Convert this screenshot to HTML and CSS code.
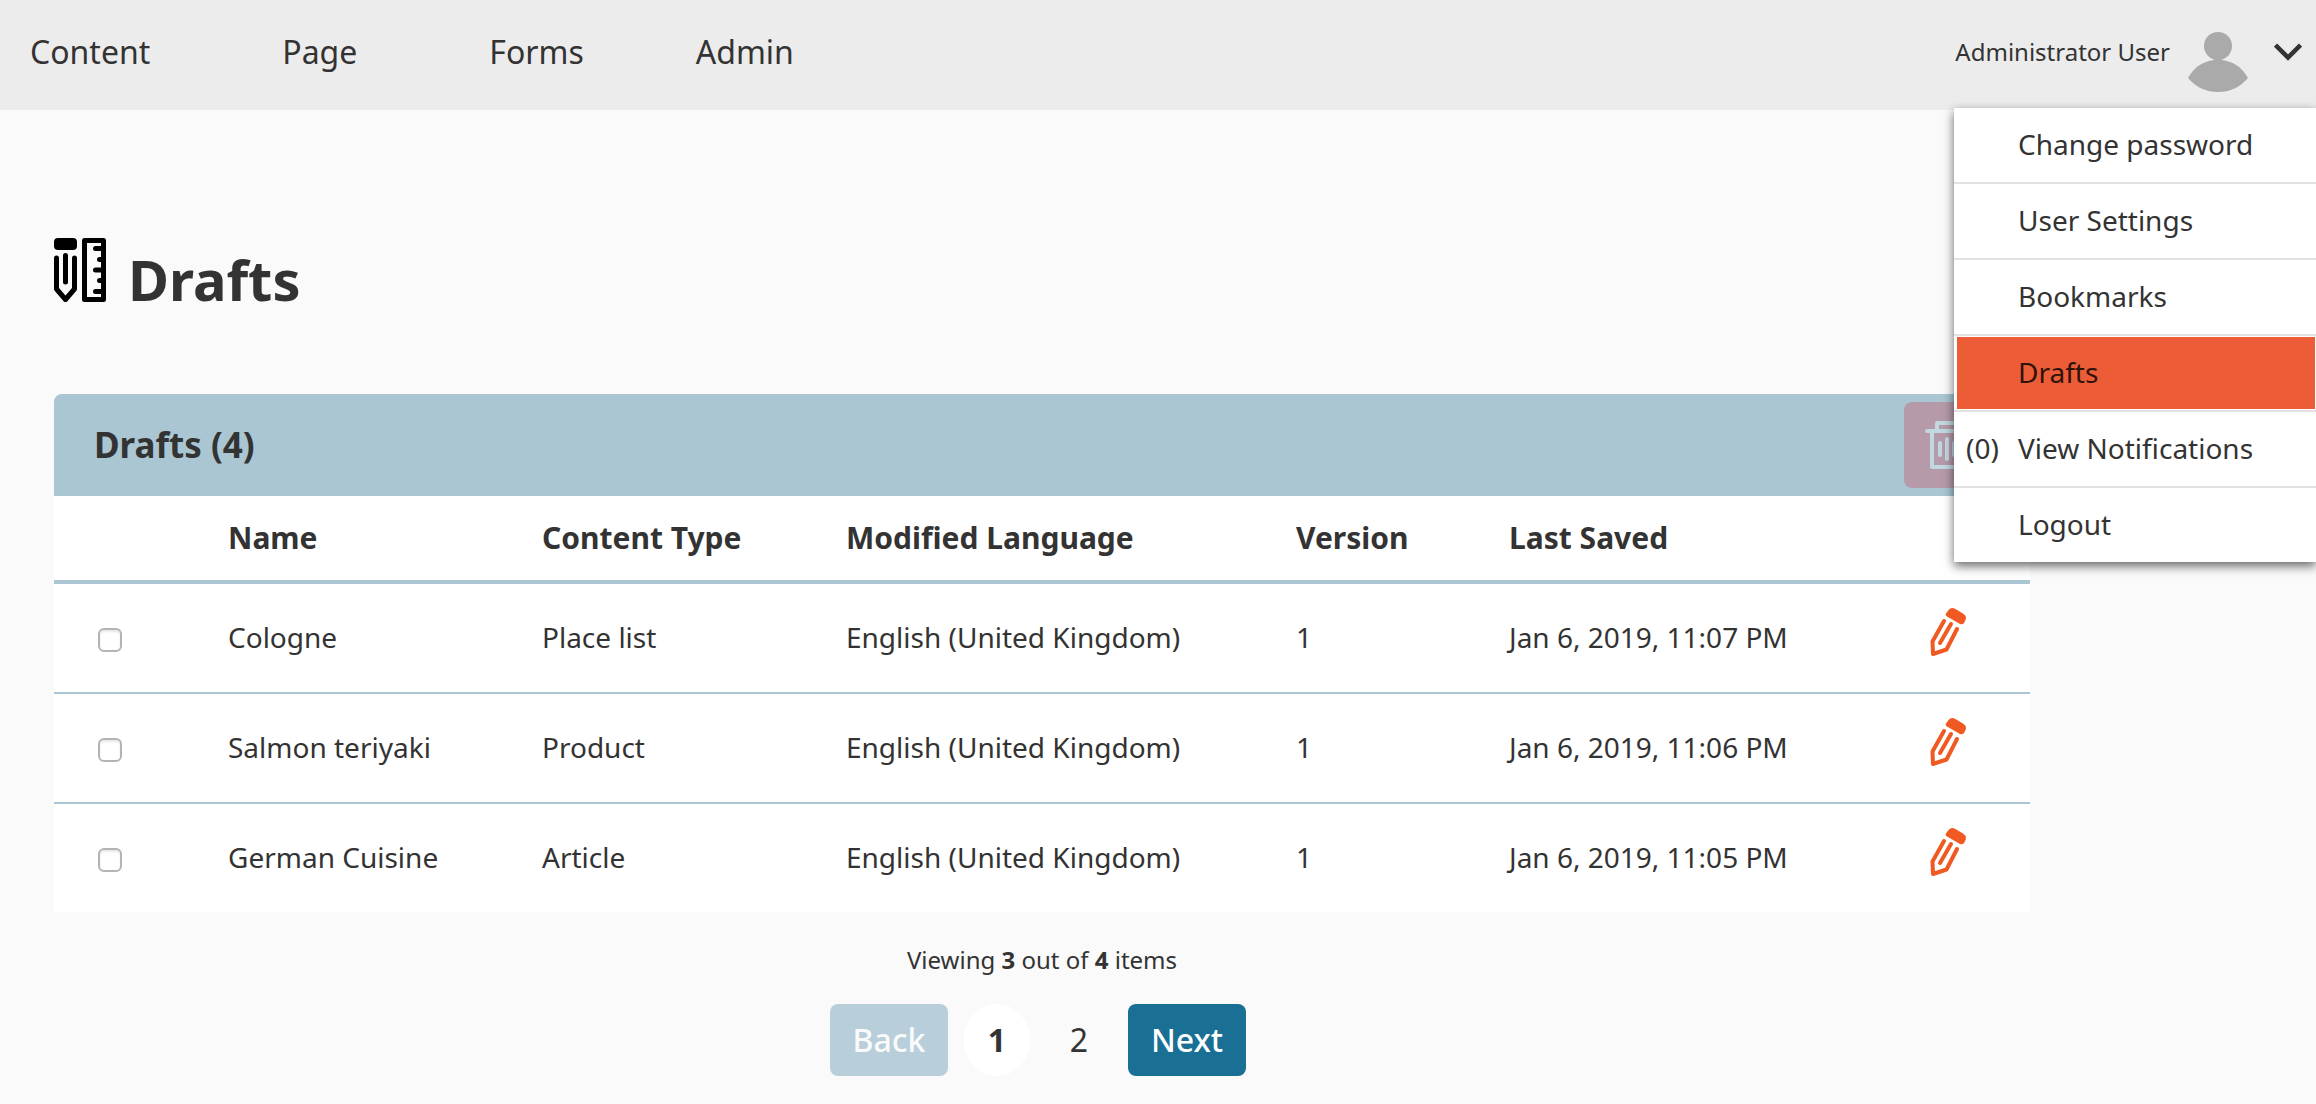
FILE: index.html
```html
<!DOCTYPE html>
<html lang="en">
<head>
<meta charset="utf-8">
<title>Drafts</title>
<link rel="stylesheet" href="styles.css">
</head>
<body>
<svg class="sprite" aria-hidden="true">
  <symbol id="pencil" viewBox="0 0 36 48">
    <g fill="none" stroke="currentColor" stroke-width="4" stroke-linecap="round" stroke-linejoin="round">
      <path d="M14 13 2.500 33.500 3 46 16.500 41.500 27 21"/>
      <path d="M21 16 10 35"/>
    </g>
    <path fill="currentColor" d="M18.500 2Q21-1 24.500.500L33 5.500Q37 8 35.500 12L34 15Q32.500 17 30 16L17 8.500Q15 7 16 5.500Z"/>
  </symbol>
</svg>
<header class="topbar">
  <nav class="nav">
    <a class="has-menu" href="#">Content</a>
    <a class="has-menu" href="#">Page</a>
    <a href="#">Forms</a>
    <a href="#">Admin</a>
  </nav>
  <div class="account">
    <button class="account-toggle" type="button">
      <span>Administrator User</span>
      <svg class="avatar" viewBox="0 0 60 60" aria-hidden="true"><g fill="#aaa"><circle cx="30" cy="14" r="14"/><path d="M26 26H34V28Q51 30 60 46Q48 60 30 60T0 46Q9 30 26 28Z"/></g></svg>
      <svg class="chevron" viewBox="0 0 28 18" aria-hidden="true"><path d="M1.500 2 14 14.500 26.500 2" fill="none" stroke="#333" stroke-width="4.500"/></svg>
    </button>
    <ul class="menu">
      <li><a href="#">Change password</a></li>
      <li><a href="#">User Settings</a></li>
      <li><a href="#">Bookmarks</a></li>
      <li><a class="current" href="#">Drafts</a></li>
      <li><a href="#"><span class="count">(0)</span>View Notifications</a></li>
      <li><a href="#">Logout</a></li>
    </ul>
  </div>
</header>
<main class="page">
  <h1 class="title">
    <svg class="title-icon" viewBox="0 0 52 64" aria-hidden="true">
      <rect width="23" height="12" rx="4"/>
      <g fill="none" stroke="#000" stroke-width="5" stroke-linecap="round" stroke-linejoin="round">
        <path d="M2.500 20V51L11.500 61.500 20.500 51V20M11.500 17.500V44"/>
        <path d="M30.500 2.500H49.500V61.500H30.500ZM49.500 10.500H41.500M49.500 21.500H45.500M49.500 32H41.500M49.500 42.500H45.500M49.500 53.500H41.500"/>
      </g>
    </svg>
    Drafts
  </h1>
  <section class="panel">
    <div class="panel-head">
      <h2>Drafts (4)</h2>
      <button class="delete" type="button" aria-label="Delete selected drafts" disabled>
        <svg class="trash" viewBox="0 0 44 48" aria-hidden="true"><g fill="none" stroke="currentColor" stroke-width="4" stroke-linecap="round" stroke-linejoin="round"><path d="M2 10H42M7 10V46H37V10M12 10V2H32V10M15 22V34M22 18V38M29 22V34"/></g></svg>
      </button>
    </div>
    <table class="drafts">
      <colgroup><col class="c-check"><col><col class="c-type"><col class="c-lang"><col class="c-version"><col class="c-saved"><col class="c-edit"></colgroup>
      <thead>
        <tr><th></th><th>Name</th><th>Content Type</th><th>Modified Language</th><th>Version</th><th>Last Saved</th><th></th></tr>
      </thead>
      <tbody>
        <tr><td><input type="checkbox" aria-label="Select Cologne"></td><td>Cologne</td><td>Place list</td><td>English (United Kingdom)</td><td>1</td><td>Jan 6, 2019, 11:07 PM</td><td><button class="edit" type="button" aria-label="Edit Cologne"><svg><use href="#pencil"/></svg></button></td></tr>
        <tr><td><input type="checkbox" aria-label="Select Salmon teriyaki"></td><td>Salmon teriyaki</td><td>Product</td><td>English (United Kingdom)</td><td>1</td><td>Jan 6, 2019, 11:06 PM</td><td><button class="edit" type="button" aria-label="Edit Salmon teriyaki"><svg><use href="#pencil"/></svg></button></td></tr>
        <tr><td><input type="checkbox" aria-label="Select German Cuisine"></td><td>German Cuisine</td><td>Article</td><td>English (United Kingdom)</td><td>1</td><td>Jan 6, 2019, 11:05 PM</td><td><button class="edit" type="button" aria-label="Edit German Cuisine"><svg><use href="#pencil"/></svg></button></td></tr>
      </tbody>
    </table>
  </section>
  <p class="summary">Viewing <b>3</b> out of <b>4</b> items</p>
  <div class="pager">
    <button class="step" type="button" disabled>Back</button>
    <a class="num active" href="#">1</a>
    <a class="num" href="#">2</a>
    <button class="step" type="button">Next</button>
  </div>
</main>
</body>
</html>
```
FILE: styles.css
```css
* { box-sizing: border-box; }

body {
  margin: 0;
  background: #fafafa;
  color: #333;
  font: 28px/40px "Noto Sans", sans-serif;
}

a { color: inherit; text-decoration: none; }
button { border: 0; padding: 0; background: none; color: inherit; font: inherit; cursor: pointer; }
.sprite { display: none; }

/* Top bar */
.topbar {
  display: flex;
  justify-content: space-between;
  height: 110px;
  padding-left: 30px;
  background: #ececec;
}
.nav { display: flex; gap: 112px; font-size: 32px; line-height: 104px; }
.nav .has-menu { padding-right: 20px; }
.account { position: relative; }
.account-toggle {
  display: flex;
  align-items: center;
  height: 104px;
  padding-right: 14px;
  font-size: 24px;
}
.avatar { width: 60px; height: 60px; margin: 20px 26px 0 18px; }
.chevron { width: 28px; height: 18px; }

.menu {
  position: absolute;
  z-index: 1;
  top: 108px;
  right: 0;
  width: 362px;
  margin: 0;
  padding: 0;
  list-style: none;
  background: #fff;
  box-shadow: 0 4px 10px rgba(0, 0, 0, 0.6);
}
.menu li + li { border-top: 2px solid #e2e2e2; }
.menu a { display: block; position: relative; padding: 16px 0 18px 64px; }
.menu .current {
  margin: 0 1px 0 3px;
  border: solid #fff;
  border-width: 1px 0;
  padding: 15px 0 17px 61px;
  background: #ec5c37;
  background-clip: padding-box;
  color: #2f130b;
}
.count { position: absolute; left: 12px; }

/* Page */
.page { padding: 124px 286px 28px 54px; }
.title {
  display: flex;
  align-items: flex-start;
  gap: 22px;
  margin: 0 0 70px;
  font-size: 56px;
  line-height: 90px;
}
.title-icon { width: 52px; height: 64px; margin: 4px 0 0; }

.panel { background: #fff; border-radius: 8px 8px 0 0; }
.panel-head {
  display: flex;
  align-items: center;
  justify-content: space-between;
  height: 102px;
  padding: 0 40px;
  border-radius: 8px 8px 0 0;
  background: #a9c6d2;
}
.panel-head h2 { margin: 0; font-size: 35px; line-height: 48px; }
.delete { width: 86px; height: 86px; border-radius: 8px; background: #b69aa9; color: #c0d8df; }
.trash { display: block; width: 44px; height: 48px; margin: 0 auto; }

.drafts { width: 100%; border-collapse: separate; border-spacing: 0; table-layout: fixed; }
.c-check { width: 174px; }
.c-type { width: 304px; }
.c-lang { width: 450px; }
.c-version { width: 213px; }
.c-saved { width: 421px; }
.c-edit { width: 100px; }
.drafts th { height: 88px; padding: 0; border-bottom: 4px solid #a9c6d2; font-size: 30px; text-align: left; }
.drafts td { height: 110px; padding: 0 0 2px; border-bottom: 2px solid #a9c6d2; }
.drafts tr:last-child td { height: 108px; border-bottom: 0; }
.drafts input {
  appearance: none;
  display: block;
  width: 24px;
  height: 24px;
  margin: 6px 0 0 44px;
  border: 2px solid #b4b4b4;
  border-radius: 6px;
  background: #fff;
  box-shadow: inset 0 2px 2px #e8e8e8;
}
.edit { display: block; width: 36px; height: 48px; margin-bottom: 10px; color: #f05a22; }
.edit svg { display: block; width: 36px; height: 48px; }

/* Paging */
.summary { margin: 28px 0 24px; font-size: 24px; text-align: center; }
.pager {
  display: flex;
  justify-content: center;
  gap: 16px;
  padding-right: 8px;
  font-size: 32px;
  line-height: 72px;
}
.step { width: 118px; border-radius: 8px; background: #196f94; color: #fff; font-weight: 500; }
.step:disabled { background: #b8cfdb; color: #fafafa; }
.num { width: 66px; border-radius: 50%; text-align: center; }
.num.active { background: #fff; font-weight: 700; }
```
